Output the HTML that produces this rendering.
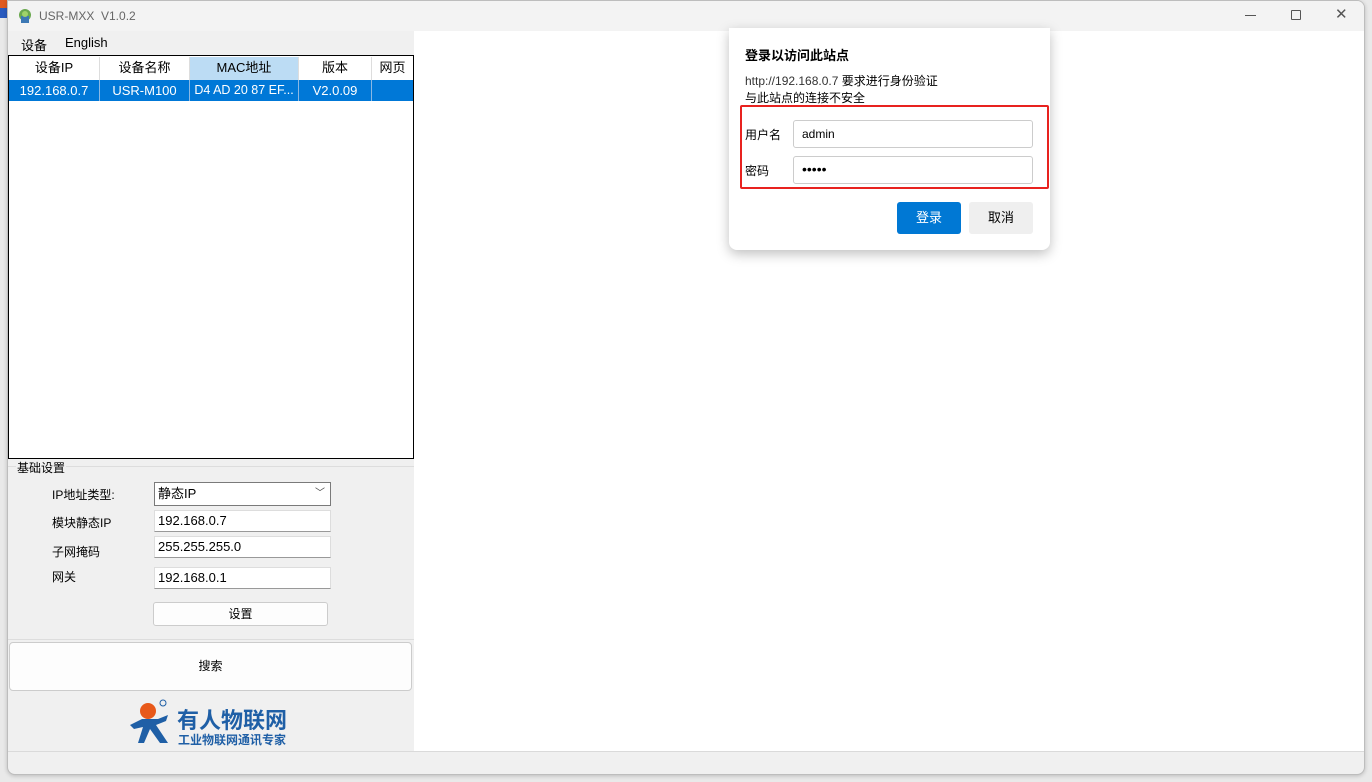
<!DOCTYPE html>
<html><head><meta charset="utf-8"><style>
*{margin:0;padding:0;box-sizing:border-box}
body{width:1372px;height:782px;background:#e9e9e9;font-family:"Liberation Sans","Noto Sans CJK SC",sans-serif;font-size:12px;color:#000;position:relative;overflow:hidden}
.a{position:absolute}
.win{left:7px;top:0;width:1358px;height:775px;background:#f0f0f0;border:1px solid #bdbdbd;border-radius:0 8px 8px 8px;overflow:hidden;box-shadow:0 1px 4px rgba(0,0,0,.2)}
.cell{position:absolute;top:0;height:100%;text-align:center;line-height:22px;border-right:1px solid #ddd}
.inp{background:#fff;border:1px solid #ddd;border-bottom:1px solid #999;height:22px;line-height:20px;padding-left:3px;font-size:13px}
</style></head><body>
<div class="a" style="left:0;top:0;width:10px;height:18px;background:#e05a20;border-radius:0 0 8px 0"></div>
<div class="a" style="left:0;top:8px;width:8px;height:10px;background:#2a5bbf"></div>
<div class="a win">
 <div class="a" style="left:0;top:0;width:1357px;height:30px;background:#f3f3f3"></div>
 <svg class="a" style="left:9px;top:7px" width="16" height="16" viewBox="0 0 16 16"><circle cx="8" cy="7" r="6" fill="#6aa84f"/><rect x="4" y="8" width="8" height="7" fill="#3c78b4"/><circle cx="8" cy="6" r="3" fill="#9fd36a"/></svg>
 <div class="a" style="left:31px;top:8px;font-size:12px;color:#666">USR-MXX&nbsp; V1.0.2</div>
 <div class="a" style="left:1237px;top:14px;width:11px;height:1px;background:#555"></div>
 <div class="a" style="left:1283px;top:9px;width:10px;height:10px;border:1px solid #555;border-radius:1px"></div>
 <div class="a" style="left:1327px;top:8px;font-size:15px;color:#555;line-height:12px">✕</div>
 <div class="a" style="left:13px;top:34px;font-size:13px">设备</div>
 <div class="a" style="left:57px;top:34px;font-size:13px">English</div>
 <div class="a" style="left:406px;top:30px;width:952px;height:720px;background:#fff"></div>
 <div class="a" style="left:0;top:54px;width:406px;height:404px;background:#fff;border:1px solid #000">
  <div class="a" style="left:0;top:1px;width:404px;height:23px">
   <div class="cell" style="left:0;width:91px;font-size:13px">设备IP</div>
   <div class="cell" style="left:91px;width:90px;font-size:13px">设备名称</div>
   <div class="cell" style="left:181px;width:109px;background:#bcdcf4;font-size:13px">MAC地址</div>
   <div class="cell" style="left:290px;width:73px;font-size:13px">版本</div>
   <div class="cell" style="left:363px;width:41px;border:0;font-size:13px">网页</div>
  </div>
  <div class="a" style="left:0;top:24px;width:404px;height:21px;background:#0078d7;color:#fff">
   <div class="cell" style="left:0;width:91px;line-height:21px;border-color:#8ab8e4;font-size:13px">192.168.0.7</div>
   <div class="cell" style="left:91px;width:90px;line-height:21px;border-color:#8ab8e4;font-size:13px">USR-M100</div>
   <div class="cell" style="left:181px;width:109px;line-height:21px;border-color:#8ab8e4;font-size:12.5px">D4 AD 20 87 EF...</div>
   <div class="cell" style="left:290px;width:73px;line-height:21px;border-color:#8ab8e4;font-size:13px">V2.0.09</div>
  </div>
 </div>
 <div class="a" style="left:0;top:465px;width:406px;height:1px;background:#ddd"></div>
 <div class="a" style="left:8px;top:458px;background:#f0f0f0;padding:0 1px;font-size:12px">基础设置</div>
 <div class="a" style="left:44px;top:485px">IP地址类型:</div>
 <div class="a" style="left:44px;top:513px">模块静态IP</div>
 <div class="a" style="left:44px;top:542px">子网掩码</div>
 <div class="a" style="left:44px;top:567px">网关</div>
 <div class="a inp" style="left:146px;top:481px;width:177px;height:24px;border:1px solid #7a7a7a;line-height:22px">静态IP<span style="position:absolute;right:5px;top:0;font-size:10px;color:#444">﹀</span></div>
 <div class="a inp" style="left:146px;top:509px;width:177px">192.168.0.7</div>
 <div class="a inp" style="left:146px;top:535px;width:177px">255.255.255.0</div>
 <div class="a inp" style="left:146px;top:566px;width:177px">192.168.0.1</div>
 <div class="a" style="left:145px;top:601px;width:175px;height:24px;background:#fdfdfd;border:1px solid #ccc;border-radius:3px;text-align:center;line-height:22px">设置</div>
 <div class="a" style="left:0;top:638px;width:406px;height:1px;background:#ddd"></div>
 <div class="a" style="left:1px;top:641px;width:403px;height:49px;background:#fdfdfd;border:1px solid #ccc;border-radius:4px;text-align:center;line-height:47px">搜索</div>
 <svg class="a" style="left:120px;top:698px" width="50" height="46" viewBox="0 0 50 46"><circle cx="20" cy="12" r="8" fill="#e8591a"/><path d="M2 26 L14 20 L30 20 L40 16 L38 22 L28 26 L40 44 L32 44 L22 30 L16 44 L10 44 L15 28 L6 30Z" fill="#1f5fa6"/><circle cx="35" cy="4" r="3" fill="none" stroke="#1f5fa6"/></svg>
 <div class="a" style="left:169px;top:702px;font-size:22px;font-weight:bold;color:#1f5fa6">有人物联网</div>
 <div class="a" style="left:170px;top:730px;font-size:12px;font-weight:bold;color:#1f5fa6">工业物联网通讯专家</div>
 <div class="a" style="left:0;top:750px;width:1358px;height:1px;background:#dadada"></div>
</div>
<div class="a" style="left:729px;top:28px;width:321px;height:222px;background:#fff;border-radius:0 0 8px 8px;box-shadow:0 4px 12px rgba(0,0,0,.25)">
 <div class="a" style="left:16px;top:17px;font-size:13px;font-weight:bold">登录以访问此站点</div>
 <div class="a" style="left:16px;top:44px;font-size:12px"><span style="color:#333">http://192.168.0.7</span> 要求进行身份验证</div>
 <div class="a" style="left:16px;top:61px;font-size:12px">与此站点的连接不安全</div>
 <div class="a" style="left:11px;top:77px;width:309px;height:84px;border:2px solid #e8221f;border-radius:2px"></div>
 <div class="a" style="left:16px;top:98px">用户名</div>
 <div class="a" style="left:16px;top:134px">密码</div>
 <div class="a" style="left:64px;top:92px;width:240px;height:28px;border:1px solid #ccc;border-radius:3px;padding-left:8px;line-height:26px">admin</div>
 <div class="a" style="left:64px;top:128px;width:240px;height:28px;border:1px solid #ccc;border-radius:3px;padding-left:8px;line-height:24px;font-size:14px">•••••</div>
 <div class="a" style="left:168px;top:174px;width:64px;height:32px;background:#0078d4;color:#fff;border-radius:3px;text-align:center;line-height:32px;font-size:13px">登录</div>
 <div class="a" style="left:240px;top:174px;width:64px;height:32px;background:#efefef;border-radius:3px;text-align:center;line-height:32px;font-size:13px">取消</div>
</div>
</body></html>
